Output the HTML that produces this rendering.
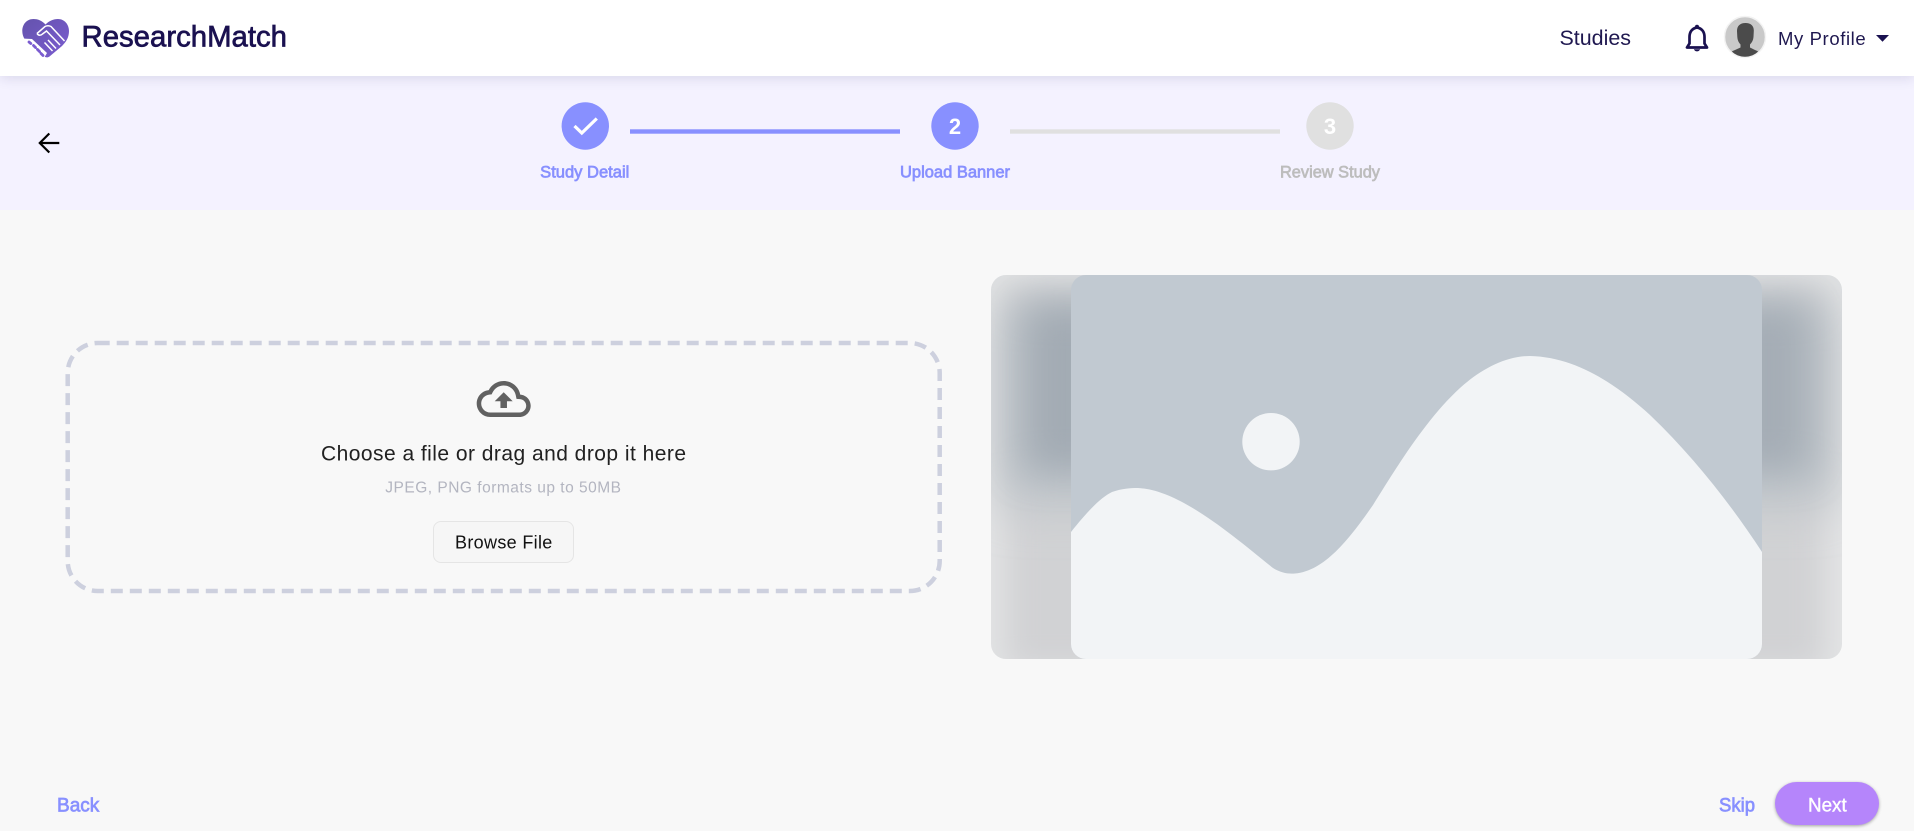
<!DOCTYPE html>
<html lang="en"><head><meta charset="utf-8"><title>ResearchMatch</title>
<style>
html,body{margin:0;padding:0;width:1914px;height:831px;overflow:hidden;background:#f8f8f8}
#band{position:absolute;left:0;top:76px;width:1914px;height:134px;background:#f4f2ff}
#hdr{position:absolute;left:0;top:0;width:1914px;height:76px;background:#fff;box-shadow:0 2px 12px rgba(40,30,90,.13)}
#next{position:absolute;left:1775px;top:782px;width:104px;height:43px;border-radius:22px;background:#b585fb;box-shadow:0 1px 3px rgba(0,0,0,.35)}
#browse{position:absolute;left:433px;top:521px;width:139px;height:40px;border:1.5px solid #e5e5e5;border-radius:8px;background:#f6f6f6}
svg{position:absolute;left:0;top:0}
text{font-family:"Liberation Sans",sans-serif}
.m{stroke-width:.7px}
</style></head><body>
<div id="band"></div><div id="hdr"></div><div id="browse"></div><div id="next"></div>
<svg width="1914" height="831" viewBox="0 0 1914 831" xmlns="http://www.w3.org/2000/svg">
<defs>
<clipPath id="bx"><rect x="991" y="275" width="851" height="384" rx="15"/></clipPath>
<clipPath id="inner"><rect x="1071" y="275" width="691" height="384" rx="15"/></clipPath>
<clipPath id="av"><circle cx="1745" cy="37" r="19.700"/></clipPath>
<filter id="b1" x="-60%" y="-60%" width="220%" height="220%"><feGaussianBlur stdDeviation="18"/></filter>
<filter id="b2" x="-60%" y="-60%" width="220%" height="220%"><feGaussianBlur stdDeviation="24"/></filter>
<filter id="b3" x="-60%" y="-60%" width="220%" height="220%"><feGaussianBlur stdDeviation="15"/></filter>
<linearGradient id="hg" x1="0" y1="0" x2="1" y2="1"><stop offset="0" stop-color="#6453ad"/><stop offset="1" stop-color="#7b5cd0"/></linearGradient>
</defs>

<!-- logo -->
<path d="M45.500 24.500C42 20.500 37.500 19 33.500 19C26.500 19 22.300 24.500 22.300 31C22.300 37 25.500 41 29.500 45L43 55.500C45 57.500 47.500 58 49.500 56.500L62 46C66.500 41.500 69 37 69 31C69 24.500 64.500 19 58 19C53 19 49 21 45.500 24.500Z" fill="url(#hg)"/>
<path d="M22 38.500L32 39L47 53L44 58L30 48Z" fill="#fff"/>
<path d="M29 42L30.800 43.500M33.500 45.500L35.500 47.500M37.500 49.500L39.500 51.500M41 53.500L43 55.500" fill="none" stroke="#7b5cd0" stroke-width="2.800" stroke-linecap="round"/>
<path d="M37 33.500L45 26.500C47 25.500 49 25.500 51 26.500L64.500 41" fill="none" stroke="#fff" stroke-width="1.500"/>
<path d="M37 33.500C38.500 36 41 35.500 42.500 34L46.500 31L60 45" fill="none" stroke="#fff" stroke-width="1.500"/>
<path d="M48 40L56 48.500M44.500 42.500L52.500 51" fill="none" stroke="#fff" stroke-width="1.500"/>
<text x="81.500" y="46.700" font-size="30" textLength="205.500" lengthAdjust="spacingAndGlyphs" fill="#1a1150" stroke="#1a1150" stroke-width=".7">ResearchMatch</text>

<!-- nav -->
<text x="1559.500" y="45" font-size="21.500" textLength="71.500" lengthAdjust="spacingAndGlyphs" fill="#1f1850">Studies</text>
<path d="M1697 27.500C1691.500 28.500 1689.500 32.500 1689.500 37V43.500L1687 47.500H1707L1704.500 43.500V37C1704.500 32.500 1702.500 28.500 1697 27.500Z" fill="none" stroke="#1a1150" stroke-width="2.700" stroke-linejoin="round"/>
<circle cx="1697" cy="26.800" r="2" fill="#1a1150"/>
<path d="M1693.800 49.300C1694.500 50.700 1695.600 51.400 1697 51.400S1699.500 50.700 1700.200 49.300Z" fill="#1a1150"/>
<circle cx="1745" cy="37" r="20.500" fill="#c9c9c9" stroke="#f3f3f3" stroke-width="1.500"/>
<g clip-path="url(#av)">
<path d="M1727 60C1728 54 1731 51.500 1735 50L1740.500 47.500V44.500C1738.500 42.500 1737.500 40 1737.300 37L1737 31C1737 26 1740 23 1745.500 23C1751 23 1754 26 1753.800 31L1753.500 37C1753.300 40 1752 42.500 1750 44.500V47.500L1755 50C1759 51.500 1762 54 1763 60Z" fill="#4b4b4b"/>
</g>
<text x="1778" y="45" font-size="18.500" textLength="87.700" lengthAdjust="spacing" fill="#1f1850">My Profile</text>
<path d="M1876 35H1889L1882.500 41.700Z" fill="#1a1150"/>

<!-- back arrow -->
<path d="M59.300 143H40.500M49.300 133.500L39.800 143L49.300 152.500" fill="none" stroke="#000" stroke-width="2.200"/>

<!-- stepper -->
<circle cx="585.300" cy="126" r="23.700" fill="#8890ff"/>
<path d="M574.500 126L581.800 133L596.800 118.500" fill="none" stroke="#fff" stroke-width="3.200"/>
<rect x="630" y="129.300" width="270" height="4.400" fill="#8890ff"/>
<circle cx="955" cy="126" r="23.700" fill="#8890ff"/>
<text x="955" y="134" font-size="22" font-weight="700" text-anchor="middle" fill="#fff">2</text>
<rect x="1010" y="129.300" width="270" height="4.400" fill="#e0e0e0"/>
<circle cx="1330" cy="126" r="23.700" fill="#e0e0e0"/>
<text x="1330" y="134" font-size="22" font-weight="700" text-anchor="middle" fill="#fff">3</text>
<text x="540.200" y="177.700" font-size="16.500" textLength="89.100" lengthAdjust="spacingAndGlyphs" fill="#8890ff" stroke="#8890ff" class="m">Study Detail</text>
<text x="900" y="177.700" font-size="16.500" textLength="110" lengthAdjust="spacingAndGlyphs" fill="#8890ff" stroke="#8890ff" class="m">Upload Banner</text>
<text x="1280" y="177.700" font-size="16.500" textLength="100" lengthAdjust="spacingAndGlyphs" fill="#bdbdbd" stroke="#bdbdbd" class="m">Review Study</text>

<!-- dropzone -->
<rect x="67.700" y="343" width="872" height="248" rx="30" fill="none" stroke="#cdd0de" stroke-width="4.500" stroke-dasharray="12 7"/>
<path transform="translate(476.700 372) scale(2.250)" fill="#616161" d="M19.350 10.040C18.670 6.590 15.640 4 12 4 9.110 4 6.600 5.640 5.350 8.040 2.340 8.360 0 10.910 0 14c0 3.310 2.690 6 6 6h13c2.760 0 5-2.240 5-5 0-2.640-2.050-4.780-4.650-4.960zM19 18H6c-2.210 0-4-1.790-4-4 0-2.050 1.530-3.760 3.560-3.970l1.070-.11.5-.95C8.080 7.140 9.940 6 12 6c2.620 0 4.880 1.860 5.390 4.430l.3 1.500 1.530.11c1.560.1 2.780 1.410 2.780 2.960 0 1.650-1.350 3-3 3zM8 13h2.550v3h2.900v-3H16l-4-4z"/>
<text x="321" y="460.700" font-size="21" textLength="365" lengthAdjust="spacing" fill="#212121">Choose a file or drag and drop it here</text>
<text x="385.300" y="492.700" font-size="15.500" textLength="235.700" lengthAdjust="spacing" fill="#b3b5c0">JPEG, PNG formats up to 50MB</text>
<text x="455" y="548.500" font-size="18" textLength="97.300" lengthAdjust="spacing" fill="#111">Browse File</text>

<!-- image placeholder -->
<g clip-path="url(#bx)">
<rect x="991" y="275" width="851" height="384" fill="#e3e4e5"/>
<rect x="1005" y="285" width="820" height="385" fill="#d1d2d4" filter="url(#b3)"/>
<rect x="1000" y="298" width="130" height="205" fill="#bcc2c8" filter="url(#b2)"/>
<rect x="1025" y="305" width="90" height="165" fill="#a3abb4" filter="url(#b1)"/>
<rect x="1720" y="298" width="115" height="205" fill="#bcc2c8" filter="url(#b2)"/>
<rect x="1730" y="305" width="78" height="165" fill="#a5adb6" filter="url(#b1)"/>
</g>
<g clip-path="url(#inner)">
<rect x="1071" y="275" width="691" height="384" fill="#c1c9d1"/>
<path d="M1071 532C1090 508 1102 497 1112 492C1122 488.500 1130 488 1138 488C1180 490 1232 535 1273 568C1281 573 1288 574 1295 573.500C1325 571 1350 538 1373 505C1395 470 1425 420 1460 388C1480 370 1505 356 1530 356C1575 357 1615 383 1650 415C1692 455 1730 503 1762 552V660H1071Z" fill="#f2f4f6"/>
</g>
<circle cx="1271" cy="441.700" r="28.700" fill="#f2f4f6"/>

<!-- footer -->
<text x="57" y="811.700" font-size="19.500" textLength="42.300" lengthAdjust="spacingAndGlyphs" fill="#8890ff" stroke="#8890ff" class="m">Back</text>
<text x="1719" y="811.700" font-size="19.500" textLength="36" lengthAdjust="spacingAndGlyphs" fill="#8890ff" stroke="#8890ff" class="m">Skip</text>
<text x="1808" y="811.700" font-size="19.500" textLength="38.700" lengthAdjust="spacingAndGlyphs" fill="#fff" stroke="#fff" stroke-width=".4">Next</text>
</svg>
</body></html>
